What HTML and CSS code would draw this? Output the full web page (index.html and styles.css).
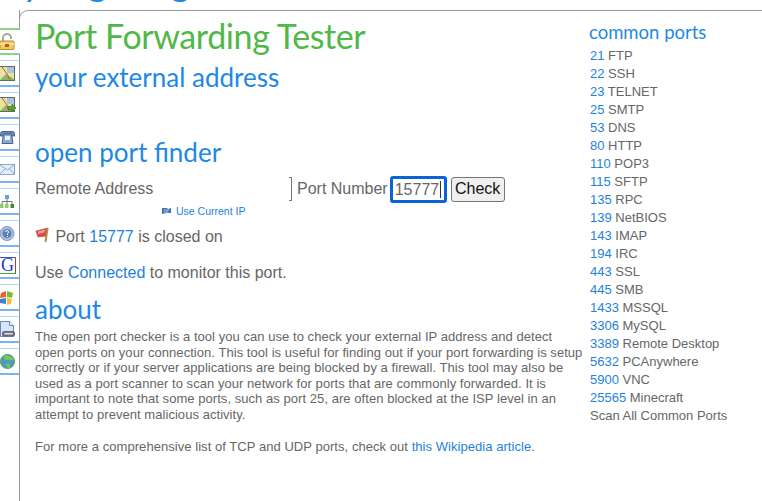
FILE: index.html
```html
<!DOCTYPE html>
<html lang="en">
<head>
    <meta charset="UTF-8">
    <title>Port Forwarding Tester</title>
    <link rel="stylesheet" href="styles.css">
</head>
<body>
    <div class="logo"><span class="logo-text">yougetsignal</span></div>
    <div class="page">
        <nav class="tabs">
            <div class="tab tab-first">
                <svg width="15" height="17" viewBox="0 0 15 17"><path d="M3 8V5a4 4 0 0 1 8 0v1" fill="none" stroke="#a9a9a0" stroke-width="2"/><rect x="0" y="8" width="14" height="8.500" rx="1" fill="#f6c860" stroke="#c08a30"/><rect x="0" y="10" width="14" height="2" fill="#fbe09a"/><rect x="5" y="11" width="4" height="3" fill="#a06c18"/></svg>
            </div>
            <div class="tab">
                <svg width="15" height="15" viewBox="0 0 15 15"><rect x="-1" y=".5" width="15.500" height="14" fill="#e8e4a0" stroke="#5c6c60"/><rect x="7" y="1" width="7" height="6" fill="#a8c4e0"/><path d="M0 14 6 8l8 5v1z" fill="#8ab860"/><path d="M2 1l5 7 3 6" stroke="#d84a30" fill="none"/></svg>
            </div>
            <div class="tab">
                <svg width="18" height="16" viewBox="0 0 18 16"><rect x="-1" y=".5" width="15.500" height="14" fill="#e8e4a0" stroke="#5c6c60"/><rect x="7" y="1" width="7" height="6" fill="#a8c4e0"/><path d="M0 14 6 8l8 5v1z" fill="#8ab860"/><path d="M2 1l5 7 2 6" stroke="#d84a30" fill="none"/><path d="M8 9.500h4V7l4 4-4 4v-2.500H8z" fill="#58a838" stroke="#2c6c20" stroke-width=".7"/></svg>
            </div>
            <div class="tab">
                <svg width="15" height="13" viewBox="0 0 15 13"><path d="M.5 5V2.500Q.5 .5 3 .5h9q2.500 0 2.500 2V5h-3V3h-8v2z" fill="#6a8cc0" stroke="#46648c"/><path d="M3.500 3h8l1.500 9.500H2z" fill="#8eaad4" stroke="#46648c"/><rect x="5" y="5" width="5" height="4" fill="#e8f0f8"/></svg>
            </div>
            <div class="tab">
                <svg width="15" height="11" viewBox="0 0 15 11"><rect x="-1" y=".5" width="15.500" height="10" fill="#e4eefa" stroke="#8aa8d0"/><path d="M0 1l7.500 5L14 1M0 10l5.500-5.500M14 10 9.500 4.500" fill="none" stroke="#8aa8d0"/></svg>
            </div>
            <div class="tab">
                <svg width="15" height="13" viewBox="0 0 15 13"><rect x="5" y="0" width="4" height="4" fill="#6a9ee0"/><path d="M7 4v3M2 9V6.500h10V9M7 6.500V9" fill="none" stroke="#777"/><rect x="0" y="9" width="3.500" height="4" fill="#8ccc70"/><rect x="5" y="9" width="3.500" height="4" fill="#8ccc70"/><rect x="10.500" y="9" width="3.500" height="4" fill="#3c8c30"/></svg>
            </div>
            <div class="tab">
                <svg width="15" height="15" viewBox="0 0 15 15"><circle cx="7" cy="7.500" r="7" fill="#a8c0e0" stroke="#7c98c0"/><circle cx="7" cy="7.500" r="4.500" fill="#5c80b4"/><path d="M5.500 6a1.500 1.500 0 1 1 2 1.500V9" fill="none" stroke="#fff"/><rect x="7" y="10" width="1" height="1" fill="#fff"/></svg>
            </div>
            <div class="tab">
                <span class="tab-g">G</span>
            </div>
            <div class="tab">
                <svg width="15" height="15" viewBox="0 0 15 15"><path d="M1 3l5-2v6L0 8z" fill="#e8602c"/><path d="M7 1l6 2-1 5-5-1z" fill="#7cb838"/><path d="M0 9l6-1v6l-6-1z" fill="#3c80d8"/><path d="M7 8l5 1-1 5-4 1z" fill="#f8c038"/></svg>
            </div>
            <div class="tab">
                <svg width="15" height="17" viewBox="0 0 15 17"><path d="M.5.5h9l4 4v11H.5z" fill="#d8e4f8" stroke="#6a88b0"/><path d="M9.500.5v4h4" fill="#f4f8ff" stroke="#6a88b0"/><rect x="2" y="10" width="13" height="5.500" rx="2.500" fill="#667" /><rect x="4" y="11.700" width="9" height="2" rx="1" fill="#ccd4dc"/></svg>
            </div>
            <div class="tab">
                <svg width="15" height="15" viewBox="0 0 15 15"><circle cx="7.500" cy="7.500" r="7" fill="#4a9cc0" stroke="#4aa050"/><path d="M3 2.500C7 0 12 2 14 6c-3 1-4-1-6 0S4 4 3 2.500zM6 10c3-1 4 0 4 4-3 1-3-2-4-4z" fill="#7cc850"/></svg>
            </div>
        </nav>
        <main class="content">
            <div class="main-col">
                <h1>Port Forwarding Tester</h1>
                <h2 class="external">your external address</h2>
                <h2 class="finder">open port finder</h2>
                <form class="port-form">
                    <div class="remote">
                        <label>Remote Address</label>
                        <span class="remote-end"></span>
                    </div>
                    <label>Port Number</label>
                    <span class="port-input">15777<span class="caret"></span></span>
                    <button type="button" class="check">Check</button>
                </form>
                <div class="use-ip">
                    <svg width="11" height="8" viewBox="0 0 11 8"><path d="M1 1h5l1 1 3-1v5H6L1 7z" fill="#3c78b8"/><path d="M3 3h5M3 5h4" stroke="#cde" stroke-width=".8"/></svg>
                    <a href="#">Use Current IP</a>
                </div>
                <p class="status">
                    <svg class="flag" width="15" height="16" viewBox="0 0 15 16"><path d="M1 4 13 1 11 9 3 10z" fill="#e04848" stroke="#c03838" stroke-width=".6"/><path d="M3 4.500l7-2-1 3-6 1.500z" fill="#f4a0a0"/><path d="M12.500 1 10.500 15" stroke="#b08c48" stroke-width="2"/></svg>
                    Port <a href="#">15777</a> is closed on
                </p>
                <p class="monitor">Use <a href="#">Connected</a> to monitor this port.</p>
                <h2 class="about">about</h2>
                <p class="copy">The open port checker is a tool you can use to check your external IP address and detect open ports on your connection. This tool is useful for finding out if your port forwarding is setup correctly or if your server applications are being blocked by a firewall. This tool may also be used as a port scanner to scan your network for ports that are commonly forwarded. It is important to note that some ports, such as port 25, are often blocked at the ISP level in an attempt to prevent malicious activity.</p>
                <p class="copy">For more a comprehensive list of TCP and UDP ports, check out <a href="#">this Wikipedia article</a>.</p>
            </div>
            <aside class="side-col">
                <h3>common ports</h3>
                <ul>
                    <li><a href="#">21</a> FTP</li>
                    <li><a href="#">22</a> SSH</li>
                    <li><a href="#">23</a> TELNET</li>
                    <li><a href="#">25</a> SMTP</li>
                    <li><a href="#">53</a> DNS</li>
                    <li><a href="#">80</a> HTTP</li>
                    <li><a href="#">110</a> POP3</li>
                    <li><a href="#">115</a> SFTP</li>
                    <li><a href="#">135</a> RPC</li>
                    <li><a href="#">139</a> NetBIOS</li>
                    <li><a href="#">143</a> IMAP</li>
                    <li><a href="#">194</a> IRC</li>
                    <li><a href="#">443</a> SSL</li>
                    <li><a href="#">445</a> SMB</li>
                    <li><a href="#">1433</a> MSSQL</li>
                    <li><a href="#">3306</a> MySQL</li>
                    <li><a href="#">3389</a> Remote Desktop</li>
                    <li><a href="#">5632</a> PCAnywhere</li>
                    <li><a href="#">5900</a> VNC</li>
                    <li><a href="#">25565</a> Minecraft</li>
                    <li>Scan All Common Ports</li>
                </ul>
            </aside>
        </main>
    </div>
</body>
</html>
```

FILE: styles.css
```css
html, body {
    margin: 0;
    height: 501px;
    overflow: hidden;
}
body {
    background: white;
    font-family: "Liberation Sans", Arial, sans-serif;
    color: #666;
}
a {
    color: #1e82dc;
    text-decoration: none;
}
.logo {
    height: 10px;
    padding-left: 22px;
    overflow: hidden;
}
.logo-text {
    display: block;
    margin-top: -20px;
    font-family: Lato, sans-serif;
    font-size: 40px;
    line-height: 0;
    color: #1e88e5;
    white-space: nowrap;
}
.page {
    display: flex;
    height: 491px;
}
.tabs {
    width: 19px;
    flex: none;
    padding-top: 18px;
    border-right: 1px solid #999;
}
.tab {
    height: 27px;
    display: flex;
    align-items: center;
    margin-bottom: 5px;
    border-top: 1px solid #b4d6f4;
    border-bottom: 2px solid #7ab4ec;
    box-sizing: border-box;
}
.tab-first {
    position: relative;
    z-index: 1;
    width: 20px;
    background: white;
    border-top: 2px solid #8fd088;
    border-bottom: 2px solid #8fd088;
}
.tab-g {
    width: 15px;
    height: 15px;
    border-top: 1px solid #3858c8;
    border-right: 1px solid #d03030;
    border-bottom: 1px solid #48a040;
    color: #1a3cc0;
    font-family: "Liberation Serif", serif;
    font-size: 18px;
    line-height: 15px;
    text-align: center;
}
.content {
    flex: 1;
    display: flex;
    margin-left: -1px;
    border-top: 1px solid #999;
    border-left: 1px solid #999;
    border-top-left-radius: 9px;
}
.main-col {
    width: 555px;
    padding-left: 15px;
    box-sizing: border-box;
}
h1, h2, h3 {
    margin: 0;
    font-family: Lato, sans-serif;
    font-weight: 400;
    color: #1e88e5;
}
h1 {
    margin-top: 4px;
    font-size: 34px;
    line-height: 42px;
    letter-spacing: -.4px;
    color: #50b848;
}
h2 {
    font-size: 26px;
    line-height: 32px;
}
.external {
    margin-top: 4px;
}
.finder {
    margin-top: 43px;
}
.port-form {
    display: flex;
    align-items: center;
    height: 30px;
    margin-top: 6px;
    font-size: 16px;
}
.remote {
    width: 257px;
    display: flex;
    justify-content: space-between;
    align-items: center;
    margin-right: 5px;
}
.remote-end {
    width: 2px;
    height: 22px;
    border: 1px solid #777;
    border-left: 0;
}
.port-input {
    width: 49px;
    height: 21px;
    margin-left: 2px;
    padding-left: 2px;
    border: 3px solid #0a64d8;
    border-radius: 3px;
    line-height: 21px;
    white-space: nowrap;
}
.caret {
    display: inline-block;
    width: 1px;
    height: 17px;
    margin-left: 1px;
    vertical-align: -3px;
    background: #333;
}
.check {
    width: 54px;
    height: 25px;
    margin-left: 4px;
    padding: 0;
    background: #efefef;
    border: 1px solid #767676;
    border-radius: 3px;
    color: #111;
    font: 16px "Liberation Sans", Arial, sans-serif;
}
.use-ip {
    display: flex;
    align-items: center;
    gap: 4px;
    margin-left: 126px;
    font-size: 10.5px;
    line-height: 14px;
}
.status {
    margin: 9px 0 0;
    font-size: 16px;
    line-height: 20px;
}
.flag {
    margin-right: 1px;
    vertical-align: -1px;
}
.monitor {
    margin: 16px 0 0;
    font-size: 16px;
    line-height: 20px;
}
.about {
    margin: 10px 0 4px;
}
.copy {
    width: 548px;
    margin: 0 0 17px;
    font-size: 13px;
    line-height: 15.500px;
    letter-spacing: .05px;
}
.side-col {
    padding: 9px 0 0 15px;
}
h3 {
    margin-left: -1px;
    font-size: 18.500px;
    line-height: 24px;
}
ul {
    list-style: none;
    margin: 3px 0 0;
    padding: 0;
    font-size: 13px;
    line-height: 18px;
}
```
